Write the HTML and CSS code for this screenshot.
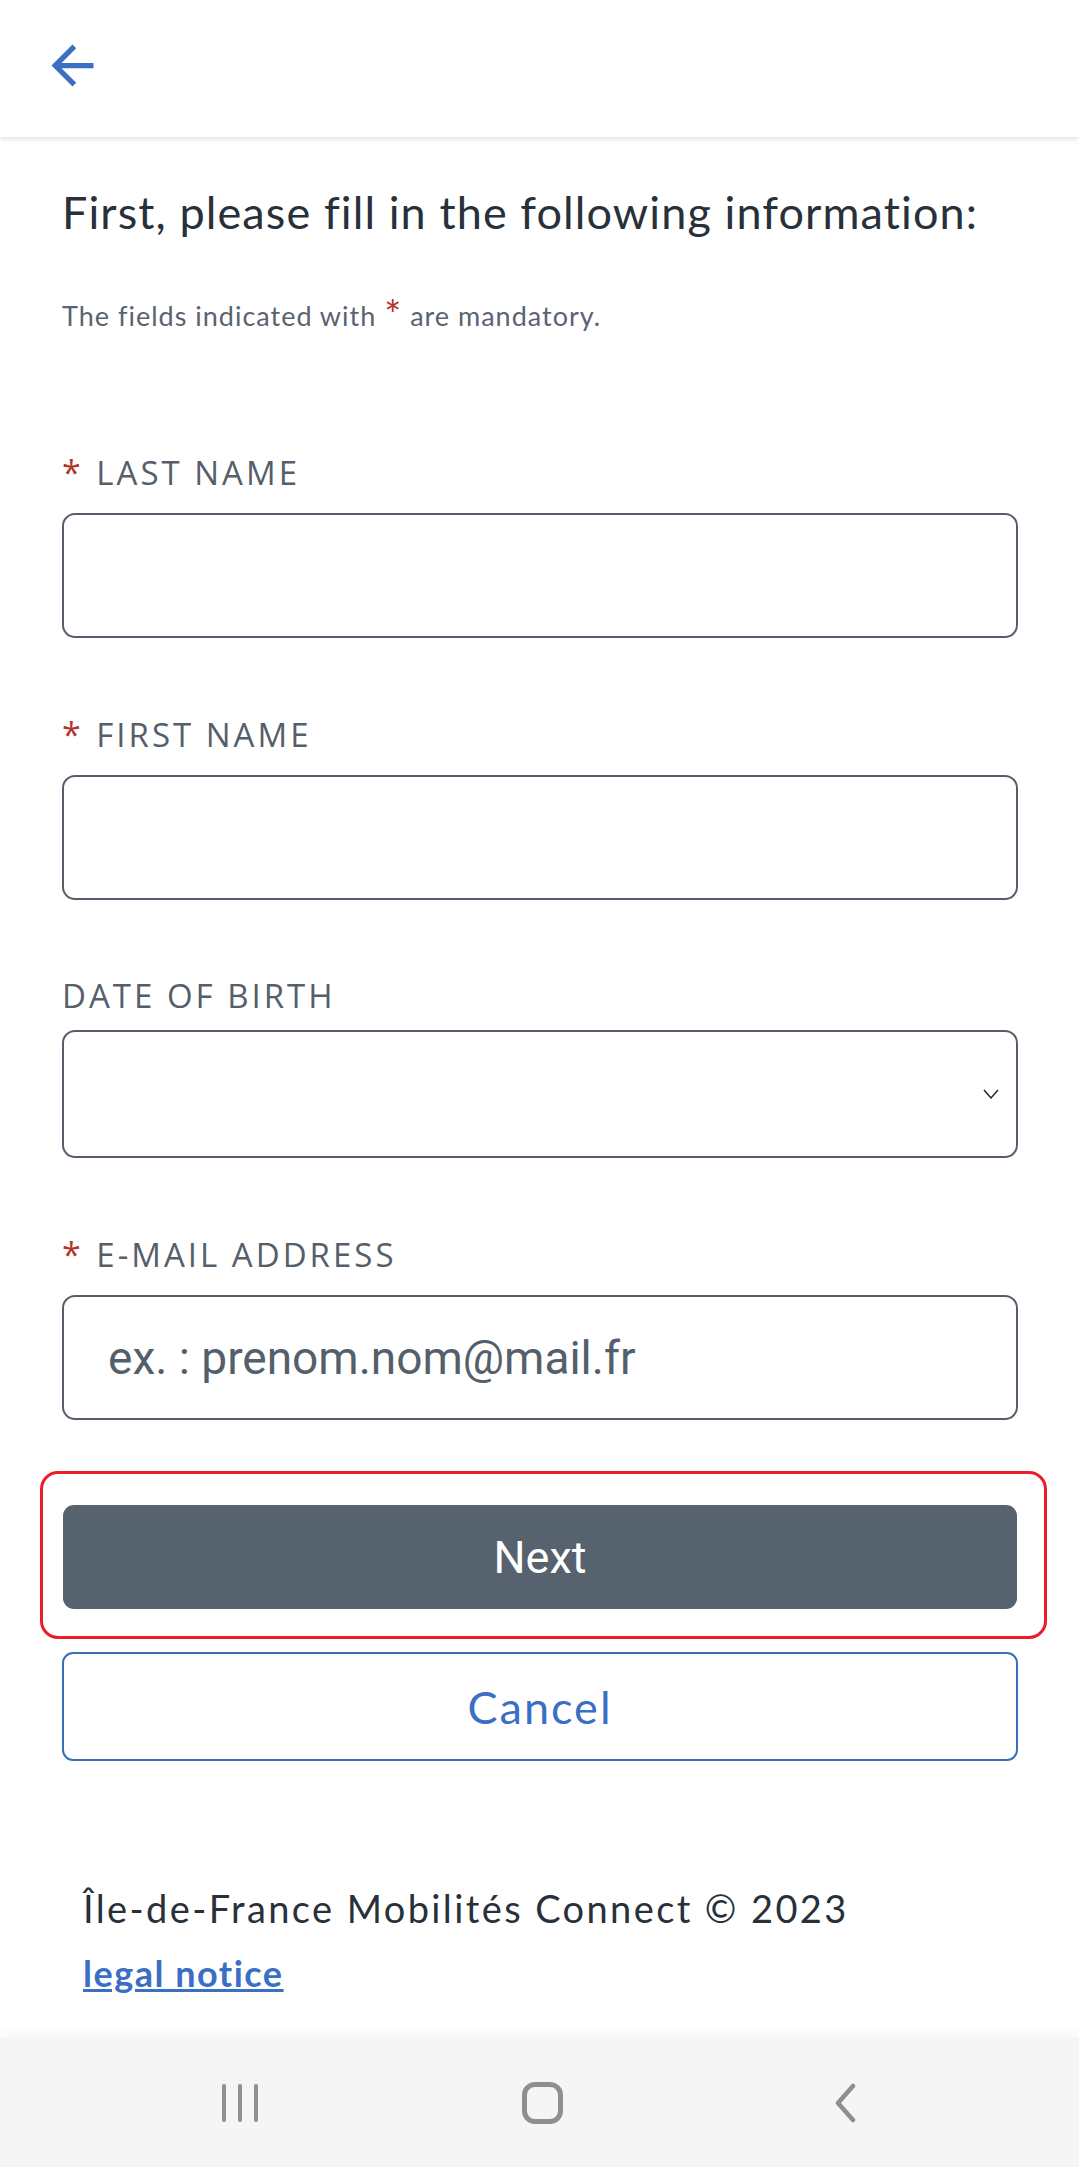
FILE: index.html
```html
<!DOCTYPE html>
<html lang="en">
<head>
  <meta charset="UTF-8">
  <meta name="viewport" content="width=device-width, initial-scale=1.0">
  <title>Île-de-France Mobilités Connect</title>
  <link rel="stylesheet" href="styles.css">
</head>
<body>
  <header class="topbar">
    <button class="back" aria-label="Back">
      <svg viewBox="0 0 24 24" width="63" height="63"><path d="M20 11H7.83l5.59-5.59L12 4l-8 8 8 8 1.41-1.41L7.83 13H20v-2z" fill="#3a6fc4"/></svg>
    </button>
  </header>

  <main class="content">
    <h1 class="intro">First, please fill in the following information:</h1>
    <p class="note">The fields indicated with <span class="req">*</span> are mandatory.</p>

    <form class="form" onsubmit="return false">
      <div class="field">
        <label for="lastName"><span class="req">*</span> LAST NAME</label>
        <input type="text" id="lastName" class="box">
      </div>
      <div class="field">
        <label for="firstName"><span class="req">*</span> FIRST NAME</label>
        <input type="text" id="firstName" class="box">
      </div>
      <div class="field field-select">
        <label for="birth">DATE OF BIRTH</label>
        <div class="box select" id="birth">
          <svg viewBox="0 0 16 10" width="16" height="10"><path d="M1 1l7 8 7-8" fill="none" stroke="#222" stroke-width="1.4"/></svg>
        </div>
      </div>
      <div class="field">
        <label for="email"><span class="req">*</span> E-MAIL ADDRESS</label>
        <input type="email" id="email" class="box" placeholder="ex. : prenom.nom@mail.fr">
      </div>

      <div class="highlight">
        <button class="btn-next">Next</button>
      </div>
      <button class="btn-cancel">Cancel</button>
    </form>

    <footer class="footer">
      <p>Île-de-France Mobilités Connect © 2023</p>
      <a href="#">legal notice</a>
    </footer>
  </main>

  <nav class="sysnav">
    <div class="recents"><span></span><span></span><span></span></div>
    <div class="home"></div>
    <svg class="sysback" viewBox="0 0 24 40" width="24" height="40"><path d="M20 3L5 20l15 17" fill="none" stroke="#8f8f8f" stroke-width="4.5" stroke-linecap="round" stroke-linejoin="round"/></svg>
  </nav>
</body>
</html>
```

FILE: styles.css
```css
* {
  margin: 0;
  padding: 0;
  box-sizing: border-box;
}

body {
  font-family: 'Lato', 'Open Sans', sans-serif;
  background: #fff;
  color: #2a313b;
  display: flex;
  flex-direction: column;
  min-height: 2167px;
}

.topbar {
  height: 137px;
  background: #fff;
  box-shadow: 0 2px 5px rgba(0, 0, 0, 0.12);
  padding: 34px 0 0 41px;
}

.back {
  border: none;
  background: none;
  display: block;
  width: 63px;
  height: 63px;
}

.back svg {
  display: block;
}

.content {
  padding: 0 61px 0 62px;
}

.intro {
  font-weight: 400;
  font-size: 45px;
  line-height: 56px;
  letter-spacing: 1.1px;
  margin-top: 47px;
  color: #28303a;
}

.note {
  font-size: 27px;
  line-height: 36px;
  letter-spacing: 1px;
  margin-top: 58px;
  color: #5a6370;
}

.note .req {
  font-size: 40px;
  vertical-align: -4px;
  line-height: 0;
}

.req {
  color: #b3362d;
}

.form {
  margin-top: 118px;
}

.field {
  margin-bottom: 76px;
}

.field label {
  display: block;
  font-family: 'Open Sans', sans-serif;
  font-weight: 500;
  font-size: 33px;
  line-height: 40px;
  letter-spacing: 3px;
  color: #555f6b;
  margin-bottom: 20px;
}

.field-select label {
  margin-bottom: 14px;
}

.field label .req {
  font-size: 34px;
  letter-spacing: 0;
  margin-right: 4px;
}

.box {
  display: block;
  width: 100%;
  height: 125px;
  border: 2px solid #555f6b;
  border-radius: 13px;
  background: #fff;
  font-family: 'Roboto', sans-serif;
  font-size: 46px;
  padding: 0 44px;
  color: #333;
  outline: none;
}

.box::placeholder {
  color: #555f6b;
}

.select {
  height: 128px;
  display: flex;
  align-items: center;
  justify-content: flex-end;
  padding: 0 17px 0 0;
}

.highlight {
  margin: -25px -29px 0 -22px;
  padding: 31px 27px 27px 20px;
  border: 3px solid #ec1c2a;
  border-radius: 18px;
}

.btn-next {
  display: block;
  width: 100%;
  height: 104px;
  border: none;
  border-radius: 11px;
  background: #56626e;
  color: #fff;
  font-family: 'Roboto', sans-serif;
  font-size: 45px;
}

.btn-cancel {
  display: block;
  width: 100%;
  height: 109px;
  margin-top: 13px;
  border: 2px solid #3a6fb8;
  border-radius: 11px;
  background: #fff;
  color: #3a6fc4;
  font-family: 'Lato', sans-serif;
  font-size: 45px;
  letter-spacing: 2px;
}

.footer {
  padding: 122px 0 0 21px;
}

.footer p {
  font-size: 38px;
  line-height: 50px;
  letter-spacing: 2.4px;
  color: #28303a;
}

.footer a {
  display: inline-block;
  margin-top: 17px;
  font-size: 36px;
  line-height: 46px;
  font-weight: 700;
  letter-spacing: 1.5px;
  color: #3a6fc4;
  text-decoration-thickness: 3px;
}

.sysnav {
  margin-top: auto;
  height: 129px;
  background: #f5f5f5;
  box-shadow: 0 -6px 10px rgba(0, 0, 0, 0.03);
  display: flex;
  align-items: center;
  padding-left: 222px;
}

.recents {
  display: flex;
  gap: 12px;
  width: 36px;
}

.recents span {
  width: 5px;
  height: 38px;
  border-radius: 2.5px;
  background: #8f8f8f;
}

.home {
  width: 41px;
  height: 42px;
  margin-left: 264px;
  border: 5px solid #8f8f8f;
  border-radius: 13px;
}

.sysback {
  margin-left: 270px;
}
```
